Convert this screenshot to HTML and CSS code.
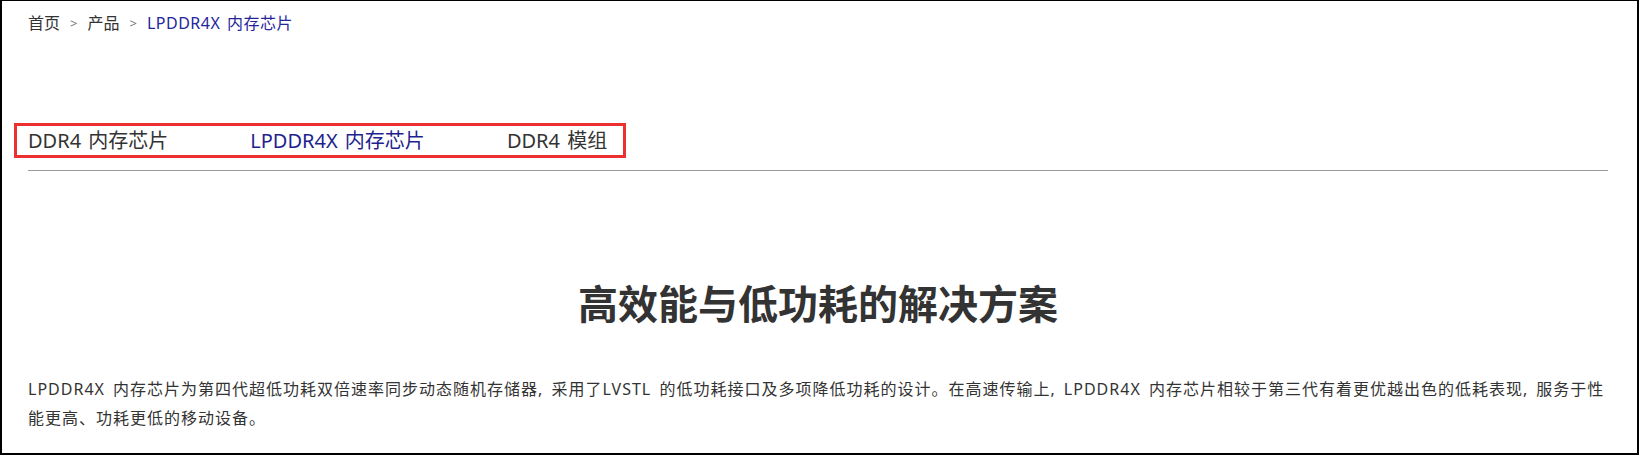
FILE: index.html
```html
<!DOCTYPE html>
<html lang="zh-CN">
<head>
<meta charset="utf-8">
<title>LPDDR4X 内存芯片</title>
<link rel="stylesheet" href="styles.css">
</head>
<body>
<div class="frame">
  <div class="page">
    <nav class="crumbs">
      <a class="crumb" href="#">首页</a>
      <span class="sep">&gt;</span>
      <a class="crumb" href="#">产品</a>
      <span class="sep">&gt;</span>
      <span class="crumb current">LPDDR4X 内存芯片</span>
    </nav>
    <div class="tabs">
      <a class="tab" href="#">DDR4 内存芯片</a>
      <a class="tab active" href="#">LPDDR4X 内存芯片</a>
      <a class="tab" href="#">DDR4 模组</a>
    </div>
    <div class="rule"></div>
    <h1 class="title">高效能与低功耗的解决方案</h1>
    <p class="intro">LPDDR4X 内存芯片为第四代超低功耗双倍速率同步动态随机存储器, 采用了LVSTL 的低功耗接口及多项降低功耗的设计。在高速传输上, LPDDR4X 内存芯片相较于第三代有着更优越出色的低耗表现, 服务于性能更高、功耗更低的移动设备。</p>
  </div>
</div>
</body>
</html>
```
FILE: styles.css
```css
html, body {
  margin: 0;
  padding: 0;
  background: #fff;
}
body {
  font-family: "Noto Sans", "Noto Sans CJK SC", sans-serif;
  color: #333;
}
.frame {
  width: 1639px;
  height: 455px;
  box-sizing: border-box;
  border: 2px solid #000;
  border-top-width: 1px;
  overflow: hidden;
}
.page {
  padding: 0 29px 0 26px;
}
.crumbs {
  display: flex;
  align-items: center;
  gap: 10px;
  margin-top: 10px;
  font-size: 16px;
  line-height: 24px;
}
.crumb {
  color: #333;
  text-decoration: none;
}
.sep {
  color: #777;
  font-size: 13px;
}
.crumb.current {
  color: #25259a;
  letter-spacing: 0.5px;
  word-spacing: 2px;
}
.tabs {
  display: inline-flex;
  gap: 82px;
  margin-top: 88px;
  margin-left: -14px;
  padding: 0 16px 0 11px;
  border: 3px solid #ec2f2f;
}
.tab {
  font-size: 20px;
  line-height: 29px;
  word-spacing: 2px;
  color: #333;
  text-decoration: none;
}
.tab.active {
  color: #1f1f8f;
}
.rule {
  height: 1px;
  background: #999;
  margin-top: 12px;
}
.title {
  margin: 105px 0 0;
  text-align: center;
  font-size: 40px;
  line-height: 56px;
  font-weight: 700;
  color: #333;
}
.intro {
  margin: 43px 0 0;
  font-size: 16px;
  line-height: 29px;
  letter-spacing: 1px;
  word-spacing: 3px;
  color: #333;
}
```
